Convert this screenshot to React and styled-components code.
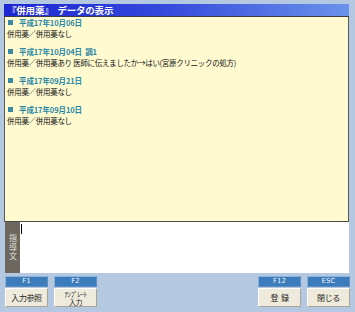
import React from 'react';
import styled, { createGlobalStyle } from 'styled-components';

const Global = createGlobalStyle`
  html, body { margin: 0; padding: 0; }
  body {
    background: #b5c8e2;
    font-family: "Noto Sans CJK JP", "Noto Sans", sans-serif;
  }
`;

const Screen = styled.div`
  width: 355px;
  height: 312px;
  box-sizing: border-box;
  padding: 4px 5px 0 4px;
  background: #b5c8e2;
  display: flex;
  flex-direction: column;
`;

const Window = styled.div`
  width: 345px;
  display: flex;
  flex-direction: column;
`;

const TitleBar = styled.div`
  height: 12px;
  box-sizing: content-box;
  border-bottom: 1px solid #3c3c44;
  background: linear-gradient(to right, #1d27d2 0%, #3448dc 45%, #6a92ea 100%);
  color: #ffffff;
  font-weight: bold;
  font-size: 9.5px;
  line-height: 12px;
  padding-left: 3px;
  white-space: pre;
  letter-spacing: -0.2px;
`;

const Records = styled.div`
  height: 204px;
  background: #fffad0;
  border-left: 1px solid #5a5a5a;
  border-right: 1px solid #5a5a5a;
  border-bottom: 1px solid #4a4a4a;
  padding: 0 0 0 2px;
  box-sizing: content-box;
  display: flex;
  flex-direction: column;
  gap: 7px;
`;

const Entry = styled.div`
  display: flex;
  flex-direction: column;
`;

const EntryHead = styled.div`
  display: flex;
  align-items: center;
  gap: 6px;
  height: 11px;
  line-height: 11px;
  color: #2a88a6;
  font-weight: bold;
  font-size: 7.5px;
  letter-spacing: -0.1px;
  white-space: pre;
`;

const Square = styled.span`
  width: 5px;
  height: 5px;
  background: #3a8aa4;
  margin-left: 1px;
`;

const EntryText = styled.div`
  height: 11px;
  line-height: 11px;
  font-size: 7.5px;
  letter-spacing: -0.3px;
  color: #111;
  white-space: pre;
`;

const InputRow = styled.div`
  height: 51px;
  display: flex;
`;

const SideTab = styled.div`
  width: 15px;
  margin-left: 1px;
  background: #6c675f;
  display: flex;
  align-items: center;
  justify-content: center;
`;

const TabLabel = styled.span`
  writing-mode: vertical-rl;
  color: #e2e0dc;
  font-size: 8px;
  letter-spacing: 1px;
  line-height: 1;
`;

const TextArea = styled.div`
  flex: 1;
  background: #ffffff;
  padding: 2px 0 0 1px;
`;

const Caret = styled.div`
  width: 1px;
  height: 10px;
  background: #000;
`;

const Footer = styled.div`
  margin-top: 3px;
  padding-left: 1px;
  display: flex;
  justify-content: space-between;
`;

const KeyGroup = styled.div`
  display: flex;
  gap: 6px;
`;

const KeyButton = styled.div`
  width: 43px;
  display: flex;
  flex-direction: column;
  gap: 1px;
`;

const KeyLabel = styled.div`
  height: 11px;
  box-sizing: border-box;
  background: #3d7cba;
  border: 1px solid #8db4dc;
  border-right-color: #5c8dc4;
  border-bottom-color: #5c8dc4;
  color: #eef4fb;
  font-family: "DejaVu Sans", sans-serif;
  font-size: 7px;
  line-height: 9px;
  text-align: center;
`;

const Face = styled.div`
  height: 19px;
  box-sizing: border-box;
  background: #efebdc;
  border: 1px solid #ffffff;
  border-right-color: #a8a496;
  border-bottom-color: #a8a496;
  color: #222;
  font-size: ${p => (p.$small ? '7px' : '8px')};
  line-height: ${p => (p.$small ? '8px' : '17px')};
  letter-spacing: -0.4px;
  text-align: center;
  white-space: pre;
  display: flex;
  align-items: center;
  justify-content: center;
`;

const entries = [
  { date: '平成17年10月06日', extra: '', text: '併用薬／併用薬なし' },
  { date: '平成17年10月04日', extra: '  調1', text: '併用薬／併用薬あり 医師に伝えましたか→はい(宮原クリニックの処方)' },
  { date: '平成17年09月21日', extra: '', text: '併用薬／併用薬なし' },
  { date: '平成17年09月10日', extra: '', text: '併用薬／併用薬なし' },
];

const leftKeys = [
  { key: 'F1', label: '入力参照' },
  { key: 'F2', label: 'ﾃﾝﾌﾟﾚｰﾄ\n入力', small: true },
];
const rightKeys = [
  { key: 'F12', label: '登  録' },
  { key: 'ESC', label: '閉じる' },
];

function Key({ k }) {
  return (
    <KeyButton>
      <KeyLabel>{k.key}</KeyLabel>
      <Face $small={k.small}>{k.label}</Face>
    </KeyButton>
  );
}

export default function App() {
  return (
    <>
      <Global />
      <Screen>
        <Window>
          <TitleBar>{'『併用薬』  データの表示'}</TitleBar>
          <Records>
            {entries.map((e, i) => (
              <Entry key={i}>
                <EntryHead>
                  <Square />
                  <span>{e.date + e.extra}</span>
                </EntryHead>
                <EntryText>{e.text}</EntryText>
              </Entry>
            ))}
          </Records>
          <InputRow>
            <SideTab>
              <TabLabel>指導文</TabLabel>
            </SideTab>
            <TextArea>
              <Caret />
            </TextArea>
          </InputRow>
        </Window>
        <Footer>
          <KeyGroup>
            {leftKeys.map(k => <Key key={k.key} k={k} />)}
          </KeyGroup>
          <KeyGroup>
            {rightKeys.map(k => <Key key={k.key} k={k} />)}
          </KeyGroup>
        </Footer>
      </Screen>
    </>
  );
}
